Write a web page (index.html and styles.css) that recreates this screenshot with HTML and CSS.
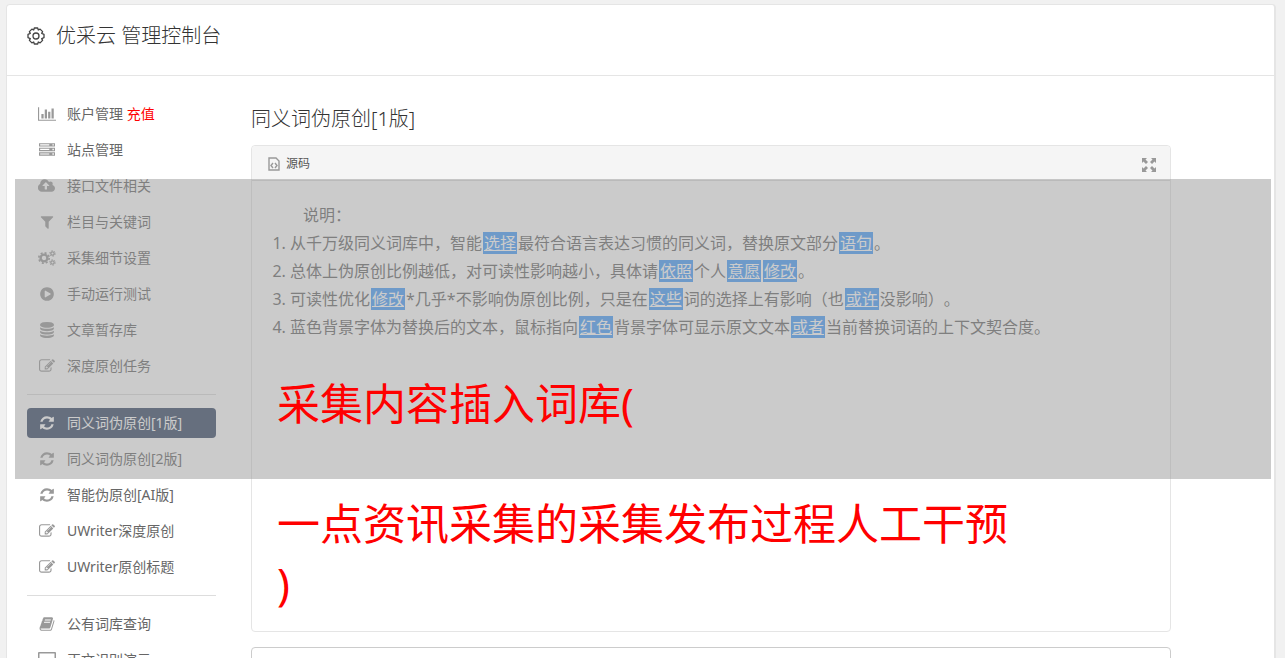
FILE: index.html
```html
<!DOCTYPE html>
<html lang="zh-CN">
<head>
    <meta charset="UTF-8">
    <meta name="viewport" content="width=device-width, initial-scale=1.0">
    <title>优采云 管理控制台</title>
    <link rel="stylesheet" href="styles.css">
</head>
<body>
    <!-- iconos -->
    <svg class="sprite" aria-hidden="true">
        <symbol id="i-chart" viewBox="0 0 2048 1792"><path d="M640 896v512h-256v-512h256zm384-512v1024h-256v-1024h256zm1024 1152v128h-2048v-1536h128v1408h1920zm-640-896v768h-256v-768h256zm384-384v1152h-256v-1152h256z"/></symbol>
        <symbol id="i-server" viewBox="0 0 1792 1792"><path fill-rule="evenodd" d="M0 128h1792v384h-1792zM0 640h1792v384h-1792zM0 1152h1792v384h-1792zM128 256v128h1024v-128zM128 768v128h1024v-128zM128 1280v128h1024v-128zM1504 240h160v160h-160zM1504 752h160v160h-160zM1504 1264h160v160h-160z"/></symbol>
        <symbol id="i-cloud" viewBox="0 0 1920 1792"><path d="M1216 864q0-14-9-23l-352-352q-9-9-23-9t-23 9l-351 351q-10 12-10 24 0 14 9 23t23 9h224v352q0 13 9.500 22.500t22.500 9.500h192q13 0 22.500-9.500t9.500-22.500v-352h224q13 0 22.500-9.500t9.500-22.500zm640 288q0 159-112.500 271.500t-271.500 112.500h-1088q-185 0-316.500-131.500t-131.500-316.500q0-130 70-240t188-165q-2-30-2-43 0-212 150-362t362-150q156 0 285.500 87t188.500 231q71-62 166-62 106 0 181 75t75 181q0 76-41 138 130 31 213.500 135.500t83.500 238.500z"/></symbol>
        <symbol id="i-filter" viewBox="0 0 1792 1792"><path d="M1595 295q17 41-14 70l-493 493v742q0 42-39 59-13 5-25 5-27 0-45-19l-256-256q-19-19-19-45v-486l-493-493q-31-29-14-70 17-39 59-39h1280q42 0 59 39z"/></symbol>
        <symbol id="i-cogs" viewBox="0 0 18 16">
            <g fill="none" stroke="currentColor">
                <circle cx="6" cy="8" r="3.400" stroke-width="2.400"/>
                <circle cx="6" cy="8" r="5.200" stroke-width="1.600" stroke-dasharray="2.040 2.040"/>
                <circle cx="14.500" cy="3.500" r="1.700" stroke-width="1.300"/>
                <circle cx="14.500" cy="3.500" r="2.800" stroke-width="1" stroke-dasharray="1.300 1.630"/>
                <circle cx="14.500" cy="12.500" r="1.700" stroke-width="1.300"/>
                <circle cx="14.500" cy="12.500" r="2.800" stroke-width="1" stroke-dasharray="1.300 1.630"/>
            </g>
        </symbol>
        <symbol id="i-play" viewBox="0 0 1792 1792"><path d="M896 128q209 0 385.500 103t279.500 279.500 103 385.500-103 385.500-279.500 279.500-385.500 103-385.500-103-279.500-279.500-103-385.500 103-385.500 279.500-279.500 385.500-103zm384 823q32-18 32-55t-32-55l-544-320q-31-19-64-1-32 19-32 56v640q0 37 32 56 16 8 32 8 17 0 32-9z"/></symbol>
        <symbol id="i-db" viewBox="0 0 1792 1792"><path d="M896 768q237 0 443-43t325-127v170q0 69-103 128t-280 93.500-385 34.500-385-34.500-280-93.500-103-128v-170q119 84 325 127t443 43zm0 768q237 0 443-43t325-127v170q0 69-103 128t-280 93.500-385 34.500-385-34.500-280-93.500-103-128v-170q119 84 325 127t443 43zm0-384q237 0 443-43t325-127v170q0 69-103 128t-280 93.500-385 34.500-385-34.500-280-93.500-103-128v-170q119 84 325 127t443 43zm0-1152q208 0 385 34.500t280 93.500 103 128v128q0 69-103 128t-280 93.500-385 34.500-385-34.500-280-93.500-103-128v-128q0-69 103-128t280-93.500 385-34.500z"/></symbol>
        <symbol id="i-edit" viewBox="0 0 1792 1792"><path d="M888 1184l116-116-152-152-116 116v56h96v96h56zm440-720q-16-16-33 1l-350 350q-17 17-1 33t33-1l350-350q17-17 1-33zm80 594v190q0 119-84.500 203.500t-203.500 84.500h-832q-119 0-203.500-84.500t-84.500-203.500v-832q0-119 84.500-203.500t203.500-84.500h832q63 0 117 25 15 7 18 23 3 17-9 29l-49 49q-14 14-32 8-23-6-45-6h-832q-66 0-113 47t-47 113v832q0 66 47 113t113 47h832q66 0 113-47t47-113v-126q0-13 9-22l64-64q15-15 35-7t20 29zm-96-738l288 288-672 672h-288v-288zm444 132l-92 92-288-288 92-92q28-28 68-28t68 28l152 152q28 28 28 68t-28 68z"/></symbol>
        <symbol id="i-refresh" viewBox="0 0 1792 1792"><path d="M1639 1056q0 5-1 7-64 268-268 434.500t-478 166.500q-146 0-282.500-55t-243.500-157l-129 129q-19 19-45 19t-45-19-19-45v-448q0-26 19-45t45-19h448q26 0 45 19t19 45-19 45l-137 137q71 66 161 102t187 36q134 0 250-65t186-179q11-17 53-117 8-23 30-23h192q13 0 22.500 9.500t9.500 22.500zm25-800v448q0 26-19 45t-45 19h-448q-26 0-45-19t-19-45 19-45l138-138q-148-137-349-137-134 0-250 65t-186 179q-11 17-53 117-8 23-30 23h-199q-13 0-22.500-9.500t-9.500-22.500v-7q65-268 270-434.500t480-166.500q146 0 284 55.500t245 156.500l130-129q19-19 45-19t45 19 19 45z"/></symbol>
        <symbol id="i-book" viewBox="0 0 1792 1792"><path d="M1703 478q40 57 18 129l-275 906q-19 64-76.500 107.500t-122.500 43.500h-923q-77 0-148.500-53.500t-99.500-131.500q-24-67-2-127 0-4 3-27t4-37q1-8-3-21.500t-3-19.500q2-11 8-21t16.500-23.500 16.500-23.500q23-38 45-91.500t30-91.500q3-10 .5-30t-.5-28q3-11 17-28t17-23q21-36 42-92t25-90q1-9-2.500-32t.5-28q4-13 22-30.500t22-22.500q19-26 42.500-84.500t27.500-96.500q1-8-3-25.500t-2-26.500q2-8 9-18t18-23 17-21q8-12 16.500-30.500t15-35 16-36 19.500-32 26.500-23.500 36-11.500 47.500 5.500l-1 3q38-9 51-9h761q74 0 114 56t18 130l-274 906q-36 119-71.500 153.500t-128.500 34.500h-869q-27 0-38 15-11 16-1 43 24 70 144 70h923q29 0 56-15.500t35-41.500l300-987q7-22 5-57 38 15 59 43zm-1064 2q-4 13 2 22.500t20 9.500h608q13 0 25.500-9.500t16.500-22.500l21-64q4-13-2-22.500t-20-9.500h-608q-13 0-25.500 9.500t-16.500 22.500zm-83 256q-4 13 2 22.500t20 9.500h608q13 0 25.500-9.500t16.500-22.500l21-64q4-13-2-22.500t-20-9.500h-608q-13 0-25.500 9.500t-16.500 22.500z"/></symbol>
        <symbol id="i-screen" viewBox="0 0 18 16"><path fill-rule="evenodd" d="M1 0h16a1 1 0 0 1 1 1v11a1 1 0 0 1-1 1h-5l1 3h-8l1-3h-5a1 1 0 0 1-1-1v-11a1 1 0 0 1 1-1zM1.500 1.500v9h15v-9z"/></symbol>
    </svg>

    <div class="card">
        <header class="card-header">
            <svg class="gear" viewBox="0 0 18 18">
                <path d="M7.300 1h3.400l.6 2 1.800-.9 2.500 2.500-.9 1.800 2.300.9v3.400l-2.300.9.900 1.800-2.500 2.500-1.800-.9-.6 2h-3.400l-.6-2-1.800.9-2.500-2.500.9-1.800-2.300-.9v-3.400l2.300-.9-.9-1.800 2.500-2.500 1.800.9z"/>
                <circle cx="9" cy="9" r="3"/>
            </svg>
            <h1>优采云 管理控制台</h1>
        </header>

        <div class="card-body">
            <nav class="sidebar">
                <a href="#"><svg><use href="#i-chart"/></svg><span>账户管理 <em>充值</em></span></a>
                <a href="#"><svg><use href="#i-server"/></svg>站点管理</a>
                <a href="#"><svg><use href="#i-cloud"/></svg>接口文件相关</a>
                <a href="#"><svg><use href="#i-filter"/></svg>栏目与关键词</a>
                <a href="#"><svg><use href="#i-cogs"/></svg>采集细节设置</a>
                <a href="#"><svg><use href="#i-play"/></svg>手动运行测试</a>
                <a href="#"><svg><use href="#i-db"/></svg>文章暂存库</a>
                <a href="#"><svg><use href="#i-edit"/></svg>深度原创任务</a>
                <hr>
                <a href="#" class="active"><svg><use href="#i-refresh"/></svg>同义词伪原创[1版]</a>
                <a href="#"><svg><use href="#i-refresh"/></svg>同义词伪原创[2版]</a>
                <a href="#"><svg><use href="#i-refresh"/></svg>智能伪原创[AI版]</a>
                <a href="#"><svg><use href="#i-edit"/></svg>UWriter深度原创</a>
                <a href="#"><svg><use href="#i-edit"/></svg>UWriter原创标题</a>
                <hr>
                <a href="#"><svg><use href="#i-book"/></svg>公有词库查询</a>
                <a href="#"><svg><use href="#i-screen"/></svg>正文识别演示</a>
            </nav>

            <main class="content">
                <h2>同义词伪原创[1版]</h2>

                <div class="editor">
                    <div class="toolbar">
                        <button type="button">
                            <svg class="icon-source" viewBox="0 0 12 14">
                                <path d="M1 1h7l3 3v9h-10z"/>
                                <path d="M5 6l-2 2.500 2 2.500M7 6l2 2.500-2 2.500"/>
                            </svg>
                            源码
                        </button>
                        <button type="button" aria-label="全屏">
                            <svg class="icon-max" viewBox="0 0 14 14">
                                <path d="M0 0h5l-1.500 1.500 2.500 2.500-2 2-2.500-2.500-1.500 1.500zM14 0v5l-1.500-1.500-2.500 2.500-2-2 2.500-2.500-1.500-1.500zM0 14v-5l1.500 1.500 2.500-2.500 2 2-2.500 2.500 1.500 1.500zM14 14h-5l1.500-1.500-2.500-2.500 2-2 2.500 2.500 1.500-1.500z"/>
                            </svg>
                        </button>
                    </div>
                    <div class="editor-body">
                        <p class="intro">说明：</p>
                        <ol>
                            <li>从千万级同义词库中，智能<mark>选择</mark>最符合语言表达习惯的同义词，替换原文部分<mark>语句</mark>。</li>
                            <li>总体上伪原创比例越低，对可读性影响越小，具体请<mark>依照</mark>个人<mark>意愿</mark><mark>修改</mark>。</li>
                            <li>可读性优化<mark>修改</mark>*几乎*不影响伪原创比例，只是在<mark>这些</mark>词的选择上有影响（也<mark>或许</mark>没影响）。</li>
                            <li>蓝色背景字体为替换后的文本，鼠标指向<mark>红色</mark>背景字体可显示原文文本<mark>或者</mark>当前替换词语的上下文契合度。</li>
                        </ol>
                        <p class="caption">采集内容插入词库(<br><br>一点资讯采集的采集发布过程人工干预<br>)</p>
                    </div>
                </div>

                <textarea class="result" aria-label="结果"></textarea>
            </main>
        </div>

        <div class="band"></div>
    </div>
</body>
</html>
```

FILE: styles.css
```css
* {
    box-sizing: border-box;
}

body {
    margin: 0;
    padding: 4px 9px 0 6px;
    background-color: #f1f1f1;
    color: #333;
    font-family: "Noto Sans", "Noto Sans CJK SC", sans-serif;
    font-size: 14px;
    text-spacing-trim: space-all;
}

.sprite {
    display: none;
}

h1, h2, p, ol {
    margin: 0;
}

h1, h2 {
    font-size: 20px;
    font-weight: 300;
    line-height: 28px;
}

.card {
    position: relative;
    background-color: white;
    border: 1px solid #e5e5e5;
    border-right-width: 2px;
    border-radius: 4px;
}

.card-header {
    display: flex;
    align-items: center;
    gap: 11px;
    height: 71px;
    padding: 0 20px 8px;
    border-bottom: 1px solid #e5e5e5;
}

.gear {
    width: 18px;
    height: 18px;
    fill: none;
    stroke: #444;
    stroke-width: 1.3;
    stroke-linejoin: round;
}

.card-body {
    display: flex;
    gap: 35px;
    padding: 23px 103px 0 20px;
}

/* menu lateral */
.sidebar {
    display: flex;
    flex-direction: column;
    flex: 0 0 189px;
    gap: 6px;
}

.sidebar a {
    display: flex;
    align-items: center;
    gap: 11px;
    height: 30px;
    padding: 0 11px;
    border-radius: 4px;
    color: #666;
    line-height: 30px;
    text-decoration: none;
}

.sidebar svg {
    width: 18px;
    height: 16px;
    color: #999;
    fill: currentColor;
}

.sidebar em {
    color: red;
    font-style: normal;
}

.sidebar .active {
    background-color: #354765;
    color: white;
}

.sidebar .active svg {
    color: white;
}

.sidebar hr {
    width: 100%;
    margin: 7px 0;
    border: 0;
    border-top: 1px solid #ddd;
}

/* editor */
.content {
    flex: 1;
    min-width: 0;
}

.content h2 {
    padding: 6px 0 12px;
}

.editor {
    border: 1px solid #e5e5e5;
    border-radius: 4px;
}

.toolbar {
    display: flex;
    justify-content: space-between;
    align-items: center;
    height: 35px;
    padding: 0 14px 0 16px;
    background-color: #f5f5f5;
    border-bottom: 1px solid #ddd;
    border-radius: 4px 4px 0 0;
}

.toolbar button {
    display: flex;
    align-items: center;
    gap: 6px;
    padding: 0;
    border: 0;
    background: none;
    color: #555;
    font: inherit;
    font-size: 12px;
    cursor: pointer;
}

.icon-source {
    width: 12px;
    height: 14px;
    margin-top: 2px;
    fill: none;
    stroke: #999;
    stroke-width: 1.4;
}

.icon-max {
    width: 14px;
    height: 14px;
    margin-top: 4px;
    fill: #999;
}

.editor-body {
    padding: 20px 25px 17px;
    color: #666;
    font-size: 16px;
    line-height: 28px;
}

.intro {
    padding-left: 26px;
}

ol {
    padding-left: 13px;
}

mark {
    margin: 0 1px;
    padding: 0 1px;
    background-color: #459dfb;
    color: white;
    text-decoration: underline;
}

.caption {
    position: relative;
    z-index: 2;
    padding-top: 33px;
    color: red;
    font-size: 43px;
    line-height: 60px;
}

.result {
    display: block;
    width: 100%;
    height: 120px;
    margin-top: 15px;
    border: 1px solid #ccc;
    border-radius: 4px;
    resize: none;
}

/* franja gris por encima del contenido */
.band {
    position: absolute;
    z-index: 1;
    top: 174px;
    left: 8px;
    right: 3px;
    height: 300px;
    background-color: rgba(151, 151, 151, 0.5);
    pointer-events: none;
}
```
